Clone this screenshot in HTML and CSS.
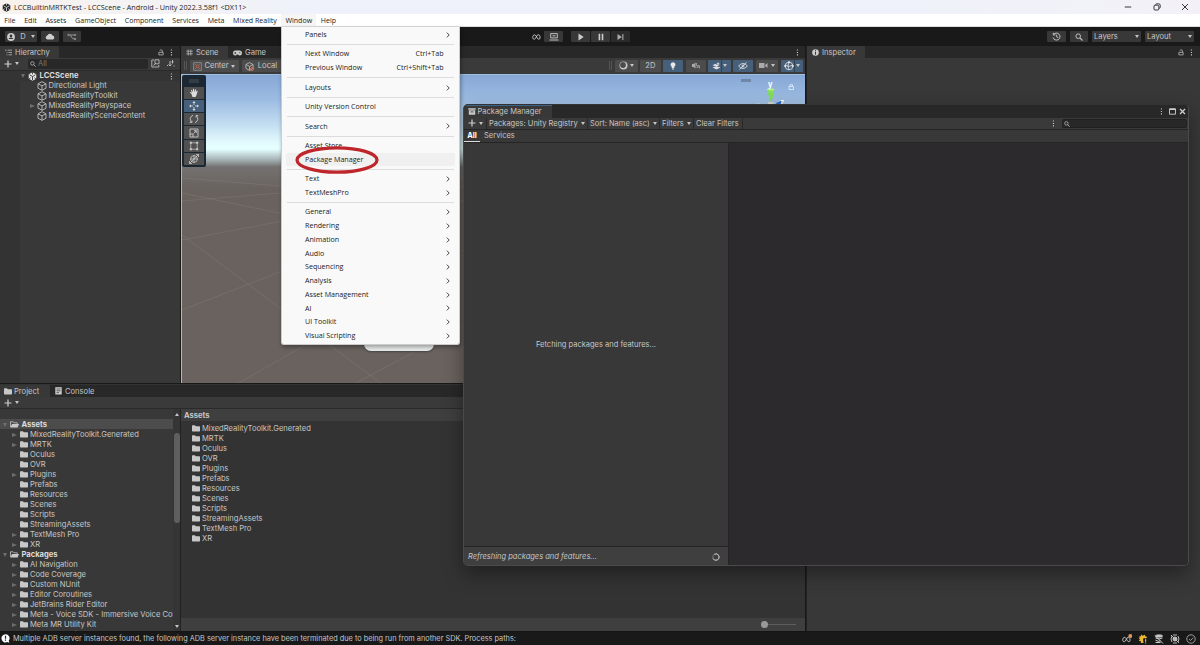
FILE: index.html
```html
<!DOCTYPE html>
<html lang="en">
<head>
<meta charset="utf-8">
<title>LCCBuiltinMRTKTest - LCCScene - Android - Unity 2022.3.58f1</title>
<link rel="stylesheet" href="styles.css">
</head>
<body>
<svg class="defs" width="0" height="0">
  <symbol id="folder" viewBox="0 0 8 7"><path d="M0 .8Q0 .2.6.2h2.300l.9 1h3.600q.6 0 .6.6v4q0 .7-.6.7H.6Q0 6.500 0 5.800z" fill="#c8c8c8"/></symbol>
  <symbol id="openfolder" viewBox="0 0 9 7"><path d="M.5 6V.8h2.700l.8 1h3.200V3" fill="none" stroke="#c8c8c8" stroke-width=".8"/><path d="M2 3h7L7.600 6.500H.4z" fill="#c8c8c8"/></symbol>
  <symbol id="cube" viewBox="0 0 10 10"><path d="M5 .7 9 2.800v4.400L5 9.300 1 7.200V2.800zM1 2.800l4 2.100 4-2.100M5 4.900v4.400" fill="none" stroke="#c0c0c0" stroke-width=".9" stroke-linejoin="round"/></symbol>
  <symbol id="unity" viewBox="0 0 10 10"><path d="M5 .2 9.200 2.600v4.800L5 9.800.8 7.400V2.600z" fill="currentColor"/><path d="M5 5V9M5 5 1.700 3.100M5 5l3.300-1.900" stroke="var(--gap)" stroke-width="1"/><path d="M5 0v2.700M.8 7.700 3 6.300M9.200 7.700 7 6.300" stroke="var(--gap)" stroke-width=".9"/></symbol>
  <symbol id="lock" viewBox="0 0 7 7"><path d="M1 3.300h5v3H1zM2 1.200q.2-.6 1-.6h1.200q.9 0 .9.900v1.800" fill="none" stroke="#bdbdbd" stroke-width=".9"/></symbol>
  <symbol id="kebab" viewBox="0 0 3 8"><path d="M.8.500h1.300v1.300H.8zM.8 3.300h1.300v1.300H.8zM.8 6.100h1.300v1.300H.8z" fill="#c8c8c8"/></symbol>
  <symbol id="plus" viewBox="0 0 8 8"><path d="M4 .5v7M.5 4h7" stroke="#d0d0d0" stroke-width="1.200"/></symbol>
  <symbol id="search" viewBox="0 0 8 8"><circle cx="3.200" cy="3.200" r="2.300" fill="none" stroke="#c0c0c0"/><path d="m5 5 2.500 2.500" stroke="#c0c0c0" stroke-width="1.100"/></symbol>
  <symbol id="infinity" viewBox="0 0 10 8"><path d="M2.600 6.500C.8 6.500.6 4.700 1 3.400 1.500 1.300 3.300.8 4.500 2.800L6 5.400c1 1.700 2.700 1.300 2.900-.2.300-2-.6-3.800-1.900-3.800-2 0-2.600 5.100-4.400 5.100z" fill="none" stroke="#cfcfcf" stroke-width="1"/></symbol>
  <symbol id="chevron" viewBox="0 0 4 6"><path d="M.8.6 3.200 3 .8 5.400" fill="none" stroke="#333" stroke-width=".9"/></symbol>
</svg>

<div class="window">
  <header class="titlebar">
    <svg class="applogo"><use href="#unity"/></svg>
    <span class="apptitle">LCCBuiltinMRTKTest - LCCScene - Android - Unity 2022.3.58f1 &lt;DX11&gt;</span>
    <div class="syscontrols">
      <svg width="8" height="8" viewBox="0 0 8 8"><path d="M.8 4h6.400" stroke="#222" stroke-width=".9"/></svg>
      <svg width="8" height="8" viewBox="0 0 8 8" fill="none" stroke="#222" stroke-width=".9"><rect x="1" y="2.200" width="4.800" height="4.800" rx="1"/><path d="M2.500 1.600q.3-.8 1.200-.8h2q1.500 0 1.500 1.500v1.900q0 .9-.9 1.200"/></svg>
      <svg width="8" height="8" viewBox="0 0 8 8"><path d="m1 1 6 6M7 1 1 7" stroke="#222" stroke-width=".9"/></svg>
    </div>
  </header>
  <nav class="menubar">
    <span>File</span><span>Edit</span><span>Assets</span><span>GameObject</span><span>Component</span><span>Services</span><span>Meta</span><span>Mixed Reality</span><span class="open">Window</span><span>Help</span>
  </nav>

  <div class="toolbar">
    <div class="btn account"><svg width="8" height="8" viewBox="0 0 8 8"><circle cx="4" cy="4" r="3.900" fill="#ccc"/><circle cx="4" cy="2.900" r="1.300" fill="#333"/><path d="M1.700 6q.2-1.500 2.300-1.500T6.300 6z" fill="#333"/></svg><span>D</span><i class="caret"></i></div>
    <div class="btn"><svg width="10" height="7" viewBox="0 0 10 7"><path d="M2.300 6.500a2 2 0 0 1 0-3.900 2.700 2.700 0 0 1 5.200 0 2 2 0 0 1 .4 3.900z" fill="#d0d0d0"/></svg></div>
    <div class="btn"><svg width="10" height="8" viewBox="0 0 10 8" fill="none" stroke="#a5a5a5" stroke-width=".8"><path d="M2.300 2H7M3 2q1 0 1.500 2t3 2"/><circle cx="1.500" cy="2" r=".8"/><circle cx="8" cy="2" r=".8"/><circle cx="8" cy="6" r=".8"/></svg></div>
    <div class="play">
      <svg class="meta" width="9" height="8"><use href="#infinity"/></svg>
      <div class="btn"><svg width="10" height="8" viewBox="0 0 10 8" fill="none" stroke="#ccc" stroke-width=".9"><path d="M1.700.6h6.600v4.300H1.700zM.5 7h9M3.500 2.800h3"/></svg></div>
      <div class="btn first"><svg width="6" height="8" viewBox="0 0 6 8"><path d="M.5.600 5.700 4 .5 7.400z" fill="#ccc"/></svg></div>
      <div class="btn"><svg width="6" height="8" viewBox="0 0 6 8"><path d="M.6.800H2.200v6.400H.6zM3.700.8h1.600v6.400H3.700z" fill="#ccc"/></svg></div>
      <div class="btn dim"><svg width="7" height="8" viewBox="0 0 7 8"><path d="M.5 1 5 4 .5 7zM5.300 1h1.100v6H5.300z" fill="#aaa"/></svg></div>
    </div>
    <div class="right">
      <div class="btn"><svg width="9" height="9" viewBox="0 0 9 9" fill="none" stroke="#c4c4c4" stroke-width="1"><path d="M1.600 2.600A3.500 3.500 0 1 1 1.100 5.500M1.300.8v2.100h2.200M4.700 2.700v2.200l1.500.7"/></svg></div>
      <div class="btn"><svg width="8" height="8"><use href="#search"/></svg></div>
      <div class="btn drop">Layers<i class="caret"></i></div>
      <div class="btn drop">Layout<i class="caret"></i></div>
    </div>
  </div>

  <main class="docks">
    <div class="leftdock">
      <div class="upper">
        <section class="hierarchy">
          <div class="tabs"><div class="tab wide"><svg width="7" height="7" viewBox="0 0 7 7"><path d="M0 1.200h1.500M2.500 1.200H7M1.500 3.500H2.500M3.500 3.500H7M1.500 5.800h1M3.500 5.800H7" stroke="#bbb" stroke-width=".8"/></svg>Hierarchy</div><div class="tabend"><svg width="6" height="7"><use href="#lock"/></svg><svg width="3" height="7"><use href="#kebab"/></svg></div></div>
          <div class="subbar"><svg width="8" height="8"><use href="#plus"/></svg><i class="caret"></i><div class="field"><svg width="6" height="6"><use href="#search"/></svg>All</div><svg width="9" height="9" viewBox="0 0 9 9" fill="none" stroke="#bbb" stroke-width=".9"><path d="M3 1H.8v7h7V6M4 .8h4v4H4zM2.500 6.500 5 4"/></svg><svg class="sort" width="9" height="9" viewBox="0 0 9 9" fill="none" stroke="#bbb"><path d="M1 6.500h1M4 2v5M2.500 5.500 4 7l1.500-1.500M6.500 1v3.500M5.500 3h2M7.500 7h1"/></svg></div>
          <div class="tree">
            <div class="row scene-row"><i class="tri down"></i><svg class="un" width="9" height="9"><use href="#unity"/></svg><b>LCCScene</b><svg class="rowmenu" width="3" height="7"><use href="#kebab"/></svg></div>
            <div class="row obj"><svg><use href="#cube"/></svg>Directional Light</div>
            <div class="row obj"><svg><use href="#cube"/></svg>MixedRealityToolkit</div>
            <div class="row obj parent"><i class="tri"></i><svg><use href="#cube"/></svg>MixedRealityPlayspace</div>
            <div class="row obj"><svg><use href="#cube"/></svg>MixedRealitySceneContent</div>
          </div>
        </section>
        <section class="scene">
          <div class="tabs"><div class="tab scene-tab"><svg width="7" height="7" viewBox="0 0 7 7"><path d="M2.200.5v6M4.800.5v6M.3 2.200h6.500M.3 4.800h6.500" stroke="#bbb" stroke-width=".8"/></svg>Scene</div><div class="tab idle"><svg width="9" height="6" viewBox="0 0 9 6"><path d="M2.500.5h4Q9 .5 9 3T6.700 5.500Q5.500 5.500 5.200 4.500H3.800Q3.500 5.500 2.300 5.500 0 5.500 0 3T2.500.5z" fill="#ccc"/><path d="M1.300 3h2M2.300 2v2M6 2.700h1.500" stroke="#282828" stroke-width=".7"/></svg>Game</div><div class="tabend"><svg width="3" height="7"><use href="#kebab"/></svg></div></div>
          <div class="scenebar">
            <i class="grip"></i>
            <div class="tool pivot"><svg width="9" height="9" viewBox="0 0 9 9" fill="none"><path d="M.7.7h7.600v7.600H.7z" stroke="#999" stroke-width=".8"/><circle cx="4.500" cy="4.500" r="1.500" stroke="#d2694a"/><path d="m2 2 1 1m3 3 1 1M7 2 6 3M3 6 2 7" stroke="#d2694a" stroke-width=".7"/></svg>Center<i class="caret"></i></div>
            <div class="tool pivot local"><svg width="9" height="9"><use href="#cube"/><circle cx="7" cy="7" r="1.500" fill="none" stroke="#d2694a"/></svg>Local<i class="caret"></i></div>
            <div class="viewtools">
              <i class="grip"></i>
              <div class="tool w23"><svg width="9" height="9" viewBox="0 0 9 9"><circle cx="4.500" cy="4.500" r="4" fill="#c9c9c9"/><circle cx="4" cy="4" r="2.900" fill="#4c4c4c"/></svg><i class="caret"></i></div>
              <div class="tool w20">2D</div>
              <div class="tool w20 on"><svg width="6" height="8" viewBox="0 0 6 8"><path d="M3 .2a2.500 2.500 0 0 1 1.300 4.600V6H1.700V4.800A2.500 2.500 0 0 1 3 .2zM2 6.500h2v1H2z" fill="#e8e8e8"/></svg></div>
              <div class="tool w20"><svg width="8" height="7" viewBox="0 0 8 7"><path d="M0 2h1.500L3.500.5v6L1.500 5H0z" fill="#aaa"/><path d="M4.500 1v3M6 3v3M7.500 3.500v3M4.500 6 7 3" stroke="#aaa" stroke-width=".8"/></svg></div>
              <div class="tool w23 on split"><svg width="9" height="8" viewBox="0 0 9 8"><path d="m.5 5.500 4-1.500 4 1.500-4 2zM.5 3.200l3-1.400 1 .7 3.500.2-3.500 2zM6 0l.5 1 1.200.4L6.500 2 6 3l-.5-1-1-.6 1-.4z" fill="#ddd"/></svg><i class="caret"></i></div>
              <div class="tool w20 on"><svg width="10" height="8" viewBox="0 0 10 8" fill="none" stroke="#ddd" stroke-width=".9"><path d="M.6 4q4.400-5 8.800 0-4.400 5-8.800 0zM8.500.3l-7 7.200"/><circle cx="5" cy="4" r="1"/></svg></div>
              <div class="tool w23"><svg width="9" height="7" viewBox="0 0 9 7"><path d="M0 1h5.500v5H0zM6 3l2.500-2v5L6 4z" fill="#aaa"/></svg><i class="caret"></i></div>
              <div class="tool w23 on split"><svg width="10" height="10" viewBox="0 0 10 10" fill="none" stroke="#e4e4e4" stroke-width=".8"><circle cx="5" cy="5" r="3.800"/><path d="M1 4q4 3 8 0M5 1q-2 4 0 8"/><circle cx="5" cy="1.200" r=".7" fill="#fff"/><circle cx="1.200" cy="5" r=".7" fill="#fff"/><circle cx="8.800" cy="5" r=".7" fill="#fff"/></svg><i class="caret"></i></div>
            </div>
          </div>
          <div class="viewport">
            <svg class="floor" viewBox="0 0 625 309"><g stroke="#a29c96" stroke-opacity=".3" stroke-width=".7" fill="none"><path d="M0 126 281 103M0 165 281 112M0 235 281 126M55 309 281 180M0 160 200 309M0 118 281 176M0 103 281 126M172 309 281 251"/></g></svg>
            <div class="toolstrip">
              <i class="handle"></i>
              <div><svg viewBox="0 0 10 10"><path d="M2.500 6 .8 4.500q.4-.7 1.200-.2l.8.6L2 2q.8-.6 1.100.2l.8 2L4 1q.8-.7 1.100.1l.2 3.100L6.200 1.500q.8-.4 1 .4l-.4 2.700 1-1.800q.8-.3.900.5L7.500 7 6.500 9h-3z" fill="#ddd"/></svg></div>
              <div class="active"><svg viewBox="0 0 10 10"><path d="M5 0 6.600 2H3.400zM5 10 3.400 8h3.200zM0 5l2-1.600v3.200zM10 5 8 6.600V3.400z" fill="#ddd"/><path d="M5 2v2M5 6v2M2 5h2M6 5h2" stroke="#ddd" stroke-width=".8"/></svg></div>
              <div><svg viewBox="0 0 10 10" fill="none" stroke="#ccc" stroke-width=".9"><path d="M4 1.200Q-.8 4 2.600 8.400M6 8.800Q10.800 6 7.400 1.600M.7 8.400h2.200V6.500M9.300 1.600H7.100v1.900"/></svg></div>
              <div><svg viewBox="0 0 10 10" fill="none" stroke="#ccc" stroke-width=".9"><path d="M1 1h8v8H1zM1 6h3v3M4.500 5.500 7.300 2.700M5 2.700h2.300V5"/></svg></div>
              <div><svg viewBox="0 0 10 10" fill="none" stroke="#ccc" stroke-width=".7"><path d="M1.800 1.800h6.400v6.400H1.800z"/><g fill="#ccc" stroke="none"><path d="M.8.800h2v2h-2zM7.200.8h2v2h-2zM.8 7.200h2v2h-2zM7.200 7.200h2v2h-2z"/></g></svg></div>
              <div><svg viewBox="0 0 10 10" fill="none" stroke="#ccc" stroke-width=".8"><circle cx="5" cy="5" r="3.400"/><path d="M5 1v8M1 5h8M.5 9.500l9-9M7 .5h2.500V3M.5 7v2.500H3"/></svg></div>
            </div>
            <i class="overlaybar"></i>
            <svg class="gizmo" width="61" height="32" viewBox="0 0 61 32"><path d="M21 14h7.500l-2.700 12h-2z" fill="#83dc5c"/><ellipse cx="24.700" cy="14.500" rx="3.800" ry="1.100" fill="#b0f08e"/><path d="M22 27h5.500v5H22z" fill="#d5d5d5"/><path d="m30 28 5-2 1 4-4 2z" fill="#3168c8"/><path d="m11 28 5 1v3h-5z" fill="#bdd"/><text x="22" y="12">y</text><text x="34" y="30">z</text><path d="M43 11.500h4.500v3H43zM44 11.500V9.700h2.500v1.800" fill="none" stroke="#dce9f7" stroke-width=".9"/></svg>
            <div class="panel3d"></div>
          </div>
        </section>
      </div>

      <section class="project">
        <div class="tabs"><div class="tab proj-tab"><svg width="8" height="7"><use href="#folder"/></svg>Project</div><div class="tab idle"><svg width="7" height="8" viewBox="0 0 7 8"><path d="M.3.200h6.400v7.300H.3z" fill="#ccc"/><path d="M1.500 2h4M1.500 3.800h4M1.500 5.600h2.500" stroke="#333" stroke-width=".7"/></svg>Console</div></div>
        <div class="subbar"><svg width="8" height="8"><use href="#plus"/></svg><i class="caret"></i></div>
        <div class="browser">
          <div class="foldertree">
            <div class="row root sel"><i class="tri down"></i><svg><use href="#openfolder"/></svg><b>Assets</b></div>
            <div class="row"><i class="tri"></i><svg><use href="#folder"/></svg>MixedRealityToolkit.Generated</div>
            <div class="row"><i class="tri"></i><svg><use href="#folder"/></svg>MRTK</div>
            <div class="row leaf"><svg><use href="#folder"/></svg>Oculus</div>
            <div class="row leaf"><svg><use href="#folder"/></svg>OVR</div>
            <div class="row"><i class="tri"></i><svg><use href="#folder"/></svg>Plugins</div>
            <div class="row leaf"><svg><use href="#folder"/></svg>Prefabs</div>
            <div class="row leaf"><svg><use href="#folder"/></svg>Resources</div>
            <div class="row leaf"><svg><use href="#folder"/></svg>Scenes</div>
            <div class="row leaf"><svg><use href="#folder"/></svg>Scripts</div>
            <div class="row leaf"><svg><use href="#folder"/></svg>StreamingAssets</div>
            <div class="row"><i class="tri"></i><svg><use href="#folder"/></svg>TextMesh Pro</div>
            <div class="row"><i class="tri"></i><svg><use href="#folder"/></svg>XR</div>
            <div class="row root"><i class="tri down"></i><svg><use href="#openfolder"/></svg><b>Packages</b></div>
            <div class="row"><i class="tri"></i><svg><use href="#folder"/></svg>AI Navigation</div>
            <div class="row"><i class="tri"></i><svg><use href="#folder"/></svg>Code Coverage</div>
            <div class="row"><i class="tri"></i><svg><use href="#folder"/></svg>Custom NUnit</div>
            <div class="row"><i class="tri"></i><svg><use href="#folder"/></svg>Editor Coroutines</div>
            <div class="row"><i class="tri"></i><svg><use href="#folder"/></svg>JetBrains Rider Editor</div>
            <div class="row"><i class="tri"></i><svg><use href="#folder"/></svg>Meta - Voice SDK - Immersive Voice Commands</div>
            <div class="row"><i class="tri"></i><svg><use href="#folder"/></svg>Meta MR Utility Kit</div>
            <div class="row"><i class="tri"></i><svg><use href="#folder"/></svg>Meta XR All-in-One SDK</div>
          </div>
          <div class="scroll"><i class="up"></i><i class="thumb"></i><i class="dn"></i></div>
          <div class="contents">
            <div class="crumb">Assets</div>
            <div class="files">
              <div class="row"><svg><use href="#folder"/></svg>MixedRealityToolkit.Generated</div>
              <div class="row"><svg><use href="#folder"/></svg>MRTK</div>
              <div class="row"><svg><use href="#folder"/></svg>Oculus</div>
              <div class="row"><svg><use href="#folder"/></svg>OVR</div>
              <div class="row"><svg><use href="#folder"/></svg>Plugins</div>
              <div class="row"><svg><use href="#folder"/></svg>Prefabs</div>
              <div class="row"><svg><use href="#folder"/></svg>Resources</div>
              <div class="row"><svg><use href="#folder"/></svg>Scenes</div>
              <div class="row"><svg><use href="#folder"/></svg>Scripts</div>
              <div class="row"><svg><use href="#folder"/></svg>StreamingAssets</div>
              <div class="row"><svg><use href="#folder"/></svg>TextMesh Pro</div>
              <div class="row"><svg><use href="#folder"/></svg>XR</div>
            </div>
            <div class="zoombar"><i class="knob"></i><i class="track"></i></div>
          </div>
        </div>
      </section>
    </div>
    <section class="inspector">
      <div class="tabs"><div class="tab insp-tab"><svg width="7" height="7" viewBox="0 0 7 7"><circle cx="3.500" cy="3.500" r="3.300" fill="#ccc"/><path d="M3.500 1.200v1.100M3.500 3v2.600" stroke="#333"/></svg>Inspector</div><div class="tabend"><svg width="6" height="7"><use href="#lock"/></svg><svg width="3" height="7"><use href="#kebab"/></svg></div></div>
    </section>
  </main>

  <footer class="status">
    <svg width="9" height="9" viewBox="0 0 9 9"><path d="M4.500.2a4 4 0 0 1 3.200 6.500l.7 2-2.300-.6A4.100 4.100 0 1 1 4.500.2z" fill="#fff"/><path d="M4.500 1.700v3M4.500 5.600v1.100" stroke="#222" stroke-width="1.200"/></svg>
    <span class="statustext">Multiple ADB server instances found, the following ADB server instance have been terminated due to being run from another SDK. Process paths:</span>
    <div class="tray">
      <svg viewBox="0 0 10 10"><g transform="translate(0 1.500)"><use href="#infinity" width="9" height="8"/></g><circle cx="8.300" cy="2" r="2" fill="#dc9760"/></svg>
      <svg viewBox="0 0 10 10"><path d="m1 2 1.500.4L3.500.6l1.200 1.200L7 .7l.2 1.600L9.300 3 7.800 4.500 6 4l-1 1 .5 4H2.800L3 7.200.8 7 2 5.200.5 3.900l1.400-.5zM7 5.300h1.200v2.500H7zM7 8.400h1.200v1.200H7z" fill="#efb92f"/></svg>
      <svg viewBox="0 0 10 10" fill="none" stroke="#ccc"><ellipse cx="5" cy="2" rx="3.500" ry="1.100" fill="#ccc"/><path d="M1.500 4q3.500 2 7 0M1.500 6.200q3 1.800 5 .7M1.500 8.500h5M1 1.500l8 8"/></svg>
      <svg viewBox="0 0 10 10" fill="none" stroke="#ccc" stroke-width=".9"><path d="M2 2Q0 5 2 8M8 2q2 3 0 6M1 1l8 8M3 1h4M3 9h4"/><circle cx="5" cy="5" r="2" fill="#bbb"/></svg>
      <svg viewBox="0 0 10 10" fill="none" stroke="#bbb" stroke-width=".8"><circle cx="5" cy="5" r="4.200"/><path d="m3 5 1.500 1.500L7.200 3.700"/></svg>
    </div>
  </footer>

  <section class="pm">
    <div class="tabs"><div class="tab pm-tab"><svg width="8" height="7" viewBox="0 0 8 7"><path d="M.3.200h7.400v1.500H.3zM.8 2.300h6.400v4.500H.8z" fill="#c8c8c8"/><path d="M2.500 3.900h3" stroke="#333" stroke-width=".8"/></svg>Package Manager</div>
      <div class="tabend"><svg width="3" height="7"><use href="#kebab"/></svg><svg width="7" height="7" viewBox="0 0 7 7"><path d="M.5.900h6v5.300h-6z" fill="none" stroke="#d0d0d0" stroke-width=".9"/><path d="M.5 1.300h6" stroke="#d0d0d0" stroke-width="1.600"/></svg><svg width="7" height="7" viewBox="0 0 7 7"><path d="m1 1 5 5M6 1 1 6" stroke="#d0d0d0" stroke-width="1.200"/></svg></div></div>
    <div class="pmbar">
      <div class="cell c1"><svg width="8" height="8"><use href="#plus"/></svg><i class="caret"></i></div>
      <div class="cell c2"><span>Packages: Unity Registry</span><i class="caret"></i></div>
      <div class="cell c3"><span>Sort: Name (asc)</span><i class="caret"></i></div>
      <div class="cell c4"><span>Filters</span><i class="caret"></i></div>
      <div class="cell c5">Clear Filters</div>
      <svg class="pmmenu" width="3" height="7"><use href="#kebab"/></svg>
      <div class="pmsearch"><svg width="6" height="6"><use href="#search"/></svg></div>
    </div>
    <div class="pmtabs"><b>All</b><span>Services</span></div>
    <div class="pmbody">
      <div class="pmlist"><div class="fetch">Fetching packages and features...</div><div class="refresh"><em>Refreshing packages and features...</em><svg width="8" height="8" viewBox="0 0 8 8" fill="none"><circle cx="4" cy="4" r="3.200" stroke="#777"/><path d="M2.500 1.200A3.200 3.200 0 1 1 1 5.500" stroke="#c4c4c4"/></svg></div></div>
      <div class="pmdetail"></div>
    </div>
  </section>

  <div class="menu">
    <div class="item">Panels<svg><use href="#chevron"/></svg></div><hr>
    <div class="item">Next Window<kbd>Ctrl+Tab</kbd></div>
    <div class="item">Previous Window<kbd>Ctrl+Shift+Tab</kbd></div><hr>
    <div class="item">Layouts<svg><use href="#chevron"/></svg></div><hr>
    <div class="item">Unity Version Control</div><hr>
    <div class="item">Search<svg><use href="#chevron"/></svg></div><hr>
    <div class="item">Asset Store</div>
    <div class="item hover">Package Manager</div><hr>
    <div class="item">Text<svg><use href="#chevron"/></svg></div>
    <div class="item">TextMeshPro<svg><use href="#chevron"/></svg></div><hr>
    <div class="item">General<svg><use href="#chevron"/></svg></div>
    <div class="item">Rendering<svg><use href="#chevron"/></svg></div>
    <div class="item">Animation<svg><use href="#chevron"/></svg></div>
    <div class="item">Audio<svg><use href="#chevron"/></svg></div>
    <div class="item">Sequencing<svg><use href="#chevron"/></svg></div>
    <div class="item">Analysis<svg><use href="#chevron"/></svg></div>
    <div class="item">Asset Management<svg><use href="#chevron"/></svg></div>
    <div class="item">AI<svg><use href="#chevron"/></svg></div>
    <div class="item">UI Toolkit<svg><use href="#chevron"/></svg></div>
    <div class="item">Visual Scripting<svg><use href="#chevron"/></svg></div>
  </div>
  <svg class="ring" width="86" height="30" viewBox="0 0 86 30"><ellipse cx="43" cy="15" rx="40" ry="12.200" fill="none" stroke="#be262c" stroke-width="3.200"/></svg>
</div>
</body>
</html>
```
FILE: styles.css
```css
* { box-sizing: border-box; }
body { margin: 0; background: #191919; }
svg { display: block; flex: none; }
i, em { flex: none; }
.defs { position: absolute; }
.window {
  position: relative;
  width: 1200px; height: 645px;
  overflow: hidden;
  display: flex; flex-direction: column;
  font: 7.600px/10px Inter, "Liberation Sans", sans-serif;
  color: #c6c6c6;
  white-space: nowrap;
}
.caret { width: 0; height: 0; border: 2.500px solid transparent; border-top: 3px solid #c4c4c4; border-bottom: 0; }

/* title and menu bar */
.titlebar { height: 14px; flex: none; display: flex; align-items: center; padding: 0 11px 0 2px; background: linear-gradient(90deg, #f8f2ee, #eff2fa 25%, #eff2fa 75%, #f3f1f7); color: #222; font: 7.220px/14px "Open Sans", "Noto Sans", sans-serif; }
.applogo { width: 9px; height: 9px; color: #222; --gap: #ddd; }
.apptitle { margin-left: 3px; }
.syscontrols { margin-left: auto; display: flex; gap: 20.500px; margin-top: -1px; }
.menubar { height: 13px; flex: none; display: flex; background: #fff; border-bottom: 1px solid #ddd; color: #222; font: 7.060px/13px "Open Sans", "Noto Sans", sans-serif; }
.menubar span { padding: 0 4.350px; }
.menubar .open { background: #f5f5f5; }

/* main toolbar */
.toolbar { height: 19px; flex: none; display: flex; align-items: center; gap: 4px; padding: 0 6px 0 5px; background: #191919; }
.btn { height: 11px; width: 18px; background: #383838; display: flex; align-items: center; justify-content: center; border-radius: 1px; }
.account { width: 32px; gap: 5px; }
.play { display: flex; align-items: center; gap: 1px; margin-left: 447px; }
.play .meta { margin-right: 2px; }
.play .btn { width: 19px; }
.play .first { margin-left: 7px; }
.play .dim { background: #2b2b2b; }
.right { margin-left: auto; display: flex; gap: 4px; }
.right .btn { width: 18.500px; }
.right .drop { width: 49px; justify-content: space-between; padding: 0 2px; }

/* docks */
.docks { flex: 1; min-height: 0; display: flex; }
.leftdock { width: 806px; flex: none; display: flex; flex-direction: column; border-right: 1px solid #191919; }
.upper { height: 337.500px; display: flex; border-bottom: 1px solid #191919; flex: none; }
.tabs { height: 12px; flex: none; background: #282828; display: flex; align-items: stretch; }
.tab { display: flex; align-items: center; gap: 3px; padding: 1px 5px 0; background: #383838; }
.idle { background: none; }
.tabend { margin-left: auto; display: flex; align-items: center; gap: 6px; padding-right: 7px; }
.hierarchy { width: 180px; flex: none; background: #383838; display: flex; flex-direction: column; }
.wide { width: 59px; }
.subbar { height: 12.500px; flex: none; background: #3a3a3a; display: flex; align-items: center; padding: 0 5px 0 4px; gap: 3px; border-bottom: 1px solid #2a2a2a; }
.field { width: 121px; height: 10px; margin-left: 6px; background: #282828; border-radius: 2px; display: flex; align-items: center; gap: 2px; padding-left: 2px; color: #777; }
.sort { margin-left: 3px; }
.row { height: 10px; padding-top: 1px; display: flex; align-items: center; flex: none; }
.tree { flex: 1; background: linear-gradient(90deg, #333 20px, #383838 20px); }
.obj { padding-left: 37px; gap: 1.500px; }
.obj svg { width: 10px; height: 10px; }
.parent { padding-left: 30px; }
.parent .tri { margin-right: .5px; }
.scene-row { padding: 1px 7px 0 21px; background: #343434; color: #ddd; }
.scene-row b { margin-left: 2.500px; letter-spacing: .08px; }
.un { margin-left: 3px; color: #e8e8e8; --gap: #343434; }
.rowmenu { margin-left: auto; }
b { font-weight: 650; }
.tri { width: 0; height: 0; border: 2.700px solid transparent; border-left: 5px solid #6e6e6e; border-right: 0; }
.tri.down { border: 2.700px solid transparent; border-top: 4.500px solid #6e6e6e; border-bottom: 0; }

/* scene view */
.scene { flex: 1; min-width: 0; border-left: 1px solid #191919; display: flex; flex-direction: column; }
.scene .tabend { padding-right: 6px; }
.scene-tab { width: 47px; }
.scenebar { height: 15.500px; flex: none; background: #3a3a3a; display: flex; align-items: center; gap: 2px; padding: 0 2px 0 3px; }
.grip { width: 3px; height: 9px; border: solid #555; border-width: 0 1px; margin-right: 1px; }
.tool { height: 12.500px; background: #4c4c4c; display: flex; align-items: center; justify-content: center; gap: 2.500px; border-radius: 1px; }
.pivot { width: 49px; padding: 1px 1px 0 0; }
.local { width: 47px; gap: 3.500px; margin-left: 1px; }
.viewtools { margin-left: auto; display: flex; align-items: center; gap: 2.350px; }
.w23 { width: 22.500px; }
.w20 { width: 20.300px; }
.on { background: #46607c; }
.split { background: linear-gradient(90deg, #46607c 13.500px, #2f4356 13.500px, #2f4356 14.500px, #46607c 14.500px); }
.viewport { position: relative; flex: 1; border: 1px solid #9dbddf; border-width: 1px 0 0 1px; overflow: hidden; background: linear-gradient(#87a8d6 0, #9dbce2 25px, #c4def1 50px, #e2fafd 67px, #e6ffff 74px, #aab8ba 84px, #737170 92px, #69625e 115px, #69625e); }
.floor { width: 625px; height: 309px; }
.toolstrip { position: absolute; left: 0; top: 0; width: 24px; height: 92px; background: #1b2733; border-radius: 2px; display: flex; flex-direction: column; align-items: center; gap: 1.100px; }
.toolstrip .handle { width: 10px; height: 4px; margin: 4px 0 3px; background: #343c44; }
.toolstrip div { width: 20px; height: 12.200px; background: #505050; display: grid; place-items: center; }
.toolstrip div.active { background: #46607c; }
.toolstrip svg { width: 10px; height: 10px; }
.overlaybar { position: absolute; left: 559px; top: 4px; width: 10px; height: 3.500px; background: #6f86a6; }
.gizmo { position: absolute; left: 564px; top: 0; font: bold 7.500px Inter, sans-serif; fill: #fff; }
.panel3d { position: absolute; left: 182px; top: 240px; width: 70px; height: 36px; background: #e9eaea; border-radius: 7px; box-shadow: 0 1px 2px #444; }

/* project browser */
.project { flex: 1; min-height: 0; display: flex; flex-direction: column; background: #333; padding-top: 1px; }
.project .tab { padding-top: 2px; }
.project .tab svg { margin-top: -1px; }
.proj-tab { width: 50px; padding-left: 4px; gap: 2px; }
.project .subbar { padding-top: 1px; }
.browser { flex: 1; min-height: 0; display: flex; }
.foldertree { width: 173px; padding-top: 10px; overflow: hidden; background: #383838; }
.foldertree .row { padding-left: 12px; }
.foldertree .leaf { padding-left: 20px; }
.foldertree .tri { margin-right: 3px; }
.foldertree .row svg, .files .row svg { width: 8px; height: 7px; margin: -1px 2px 0 0; }
.foldertree .root { padding-left: 2.500px; color: #ddd; }
.foldertree .root .tri { margin-right: 3px; }
.foldertree .root svg { width: 9px; margin-right: 3px; }
.sel { background: #4c4c4c; }
.scroll { width: 8px; background: #353535; display: flex; flex-direction: column; align-items: center; border-right: 1px solid #222; }
.scroll .up { border: 2.300px solid transparent; border-bottom: 3px solid #c4c4c4; border-top: 0; margin-top: 4px; }
.scroll .dn { border: 2.300px solid transparent; border-top: 3px solid #c4c4c4; border-bottom: 0; margin: auto 0 3px; }
.scroll .thumb { width: 6px; height: 90px; margin-top: 17px; background: #5f5f5f; border-radius: 3px; }
.contents { flex: 1; display: flex; flex-direction: column; }
.crumb { height: 12px; line-height: 13.500px; padding-left: 3px; background: #3f3f3f; font-weight: 650; }
.files { padding: 2.200px 0 0 11px; }
.zoombar { height: 13px; margin-top: auto; background: #3f3f3f; display: flex; align-items: center; justify-content: flex-end; padding-right: 9px; }
.knob { width: 7px; height: 7px; border-radius: 50%; background: #999; }
.track { width: 28px; height: 1.500px; background: #5e5e5e; }

.inspector { flex: 1; background: #383838; border-left: 1px solid #222; }
.insp-tab { width: 58px; }
.inspector .tabend { padding-right: 7px; }

.status { height: 14px; flex: none; background: #191919; display: flex; align-items: center; padding: 0 4px 0 1px; gap: 3px; border-top: 1px solid #151515; font-size: 7.340px; }
.tray { margin-left: auto; display: flex; gap: 6px; }
.tray svg { width: 10px; height: 10px; }

/* package manager window */
.pm { position: absolute; left: 463px; top: 104px; width: 726px; height: 462px; border: 1px solid #4a4a4a; border-top-color: #333; border-radius: 5px; overflow: hidden; background: #383838; display: flex; flex-direction: column; box-shadow: 0 8px 20px rgba(0, 0, 0, .38); font-size: 7.500px; }
.pm .tabs { height: 12.500px; }
.pm-tab { width: 88px; border-top: 1px solid #3c6288; padding: 0 0 0 4px; gap: 1.500px; }
.pm .tabend { padding-right: 2px; gap: 6px; }
.pm .tabend svg + svg + svg { margin-left: -3px; }
.pmbar { height: 12.500px; flex: none; display: flex; background: #3a3a3a; align-items: center; border-bottom: 1px solid #252525; }
.cell { height: 11.500px; display: flex; align-items: center; justify-content: space-between; padding: 1px 2px 0; border-right: 1px solid #292929; }
.c1 { width: 23px; padding: 0 3px 0 4px; }
.c2 { width: 101px; }
.c3 { width: 72px; }
.c4 { width: 34px; }
.c5 { width: 49px; }
.pmmenu { margin-left: auto; }
.pmsearch { width: 125px; height: 9.500px; margin: 0 1px 0 7px; background: #282828; border: 1px solid #202020; border-radius: 2px; padding: 1px; }
.pmtabs { height: 12.500px; flex: none; display: flex; border-bottom: 1px solid #252525; line-height: 11.500px; background: #383838; }
.pmtabs b { width: 16px; text-align: center; color: #fff; border-bottom: 1px solid #ddd; }
.pmtabs span { margin-left: 4px; }
.pmbody { flex: 1; display: flex; }
.pmlist { width: 265px; display: flex; flex-direction: column; border-right: 1px solid #242424; }
.fetch { flex: 1; display: grid; place-items: center; padding-top: 1.500px; }
.refresh { height: 19px; border-top: 1px solid #242424; background: #3f3f3f; display: flex; align-items: center; justify-content: space-between; padding: 1px 8px 0 4px; }
.pmdetail { flex: 1; background: #2d2a2d; }

/* window menu */
.menu { position: absolute; left: 281px; top: 27px; width: 178.500px; height: 318px; padding: 1px 4px 0; background: #f9f9f9; border: 1px solid #ccc; border-top: 0; border-radius: 0 0 3px 3px; box-shadow: 1px 2px 4px rgba(0, 0, 0, .35); color: #222; font: 7.120px/13.750px "Open Sans", "Noto Sans", sans-serif; }
.item { height: 13.750px; padding: 0 4.500px 0 19px; display: flex; align-items: center; justify-content: space-between; border-radius: 2px; }
.item svg { width: 4px; height: 6px; }
.item kbd { font: inherit; margin-right: 6.500px; }
.hover { background: #f0f0f0; }
.menu hr { height: 1px; margin: 2.350px 1px; border: 0; background: #dcdcdc; }
.ring { position: absolute; left: 294px; top: 145px; }
```
